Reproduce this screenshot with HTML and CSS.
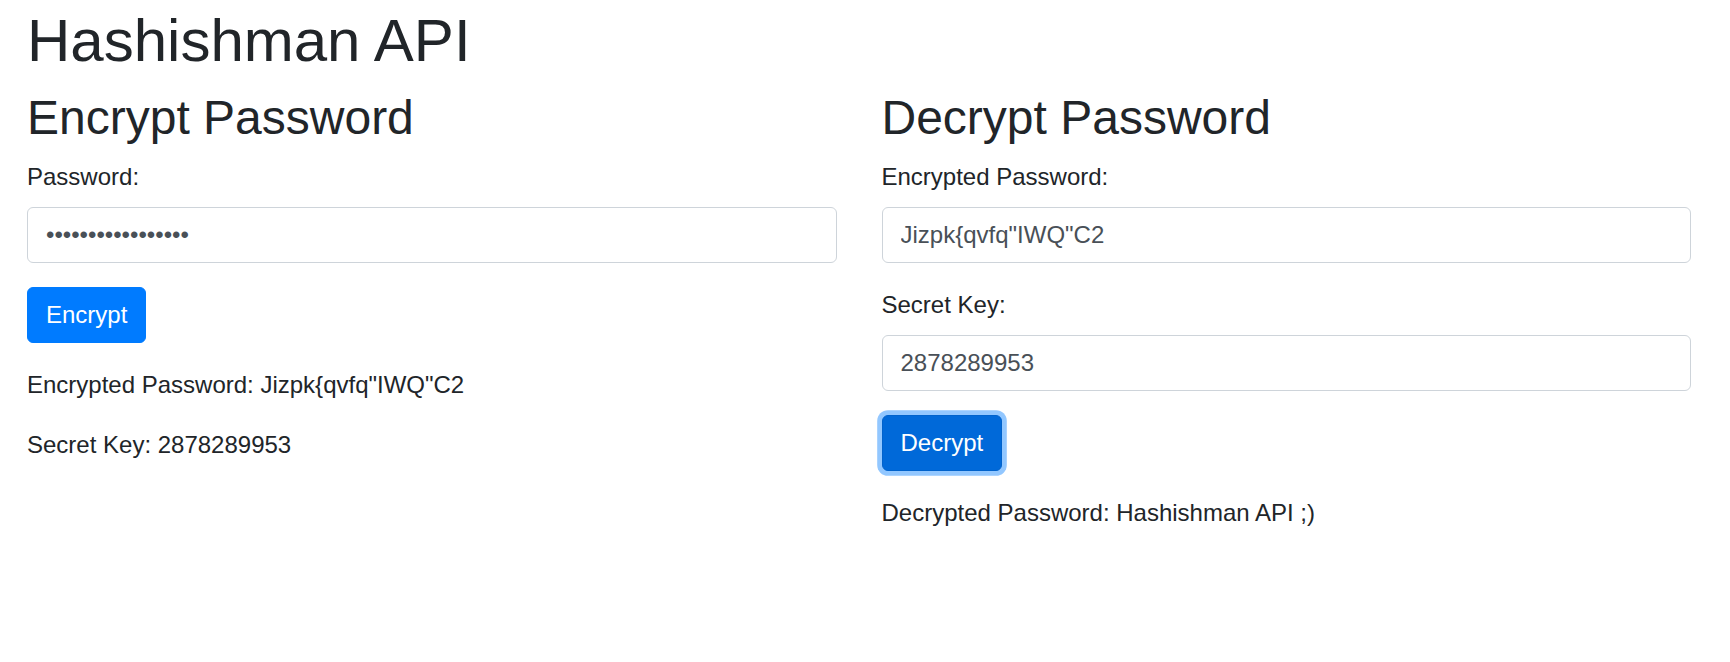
FILE: index.html
```html
<!DOCTYPE html>
<html lang="en">
<head>
<meta charset="utf-8">
<title>Hashishman API</title>
<link rel="stylesheet" href="styles.css">
</head>
<body>
<div class="page">
  <h1 class="title">Hashishman API</h1>
  <div class="columns">
    <section class="panel">
      <h2 class="panel-title">Encrypt Password</h2>
      <div class="field">
        <label class="field-label" for="password">Password:</label>
        <input class="field-input" type="password" id="password" value="Hashishman API ;)">
      </div>
      <button class="btn" type="button">Encrypt</button>
      <p class="result">Encrypted Password: Jizpk{qvfq&quot;IWQ&quot;C2</p>
      <p class="result">Secret Key: 2878289953</p>
    </section>
    <section class="panel">
      <h2 class="panel-title">Decrypt Password</h2>
      <div class="field">
        <label class="field-label" for="encrypted">Encrypted Password:</label>
        <input class="field-input" type="text" id="encrypted" value="Jizpk{qvfq&quot;IWQ&quot;C2">
      </div>
      <div class="field">
        <label class="field-label" for="secret">Secret Key:</label>
        <input class="field-input" type="text" id="secret" value="2878289953">
      </div>
      <button class="btn btn-focused" type="button">Decrypt</button>
      <p class="result">Decrypted Password: Hashishman API ;)</p>
    </section>
  </div>
</div>
</body>
</html>
```

FILE: styles.css
```css
html, body {
  margin: 0;
  padding: 0;
  background: #ffffff;
}

body {
  font-family: "Liberation Sans", Arial, sans-serif;
  font-size: 24px;
  line-height: 36px;
  color: #212529;
}

.page {
  padding: 5px 39px 0 27px;
}

.title {
  margin: 0 0 12px;
  font-size: 60px;
  line-height: 1.2;
  font-weight: 400;
}

.columns {
  display: grid;
  grid-template-columns: 1fr 1fr;
  column-gap: 45px;
}

.panel {
  min-width: 0;
}

.panel-title {
  margin: 0 0 12px;
  font-size: 48px;
  line-height: 1.2;
  font-weight: 400;
}

.field {
  margin-bottom: 24px;
}

.field-label {
  display: block;
  margin-bottom: 12px;
}

.field-input {
  display: block;
  width: 100%;
  box-sizing: border-box;
  margin: 0;
  padding: 9px 18px;
  font-family: inherit;
  font-size: 24px;
  line-height: 36px;
  color: #495057;
  background: #ffffff;
  border: 1px solid #ced4da;
  border-radius: 6px;
  outline: none;
}

.btn {
  display: block;
  width: fit-content;
  margin: 0 0 24px;
  padding: 9px 18px;
  font-family: inherit;
  font-size: 24px;
  line-height: 36px;
  color: #ffffff;
  background: #007bff;
  border: 1px solid #007bff;
  border-radius: 6px;
  cursor: pointer;
}

.btn-focused {
  background: #0069d9;
  border-color: #0062cc;
  box-shadow: 0 0 0 4.8px rgba(38, 143, 255, 0.5);
}

.result {
  margin: 0 0 24px;
}
```
